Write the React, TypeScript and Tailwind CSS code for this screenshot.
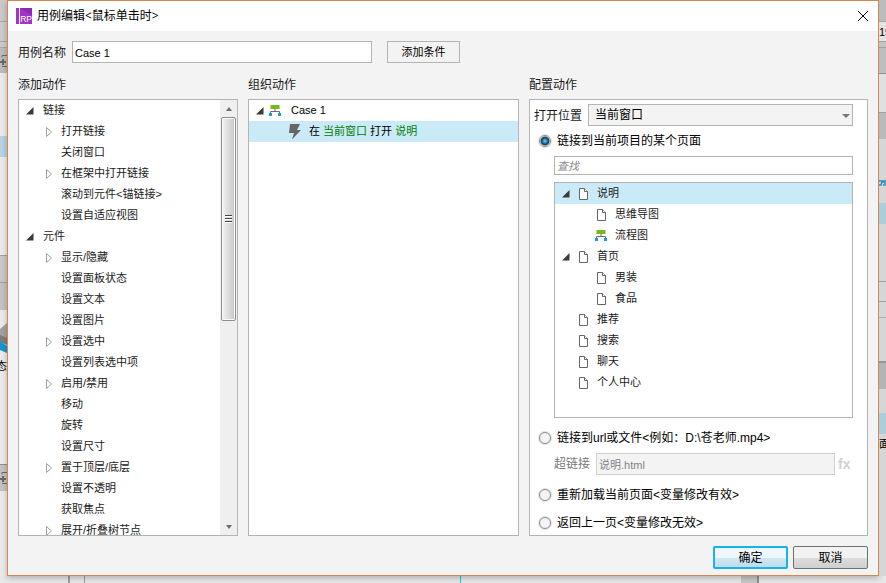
import { useState } from 'react';
import type { ReactNode } from 'react';
import clsx from 'clsx';

type NodeState = 'open' | 'closed' | 'leaf';

type ActionNode = { label: string; level: 0 | 1; state: NodeState };
type PageNode = ActionNode & { icon: 'page' | 'flow' };

const ACTIONS: ActionNode[] = [
  { label: '链接', level: 0, state: 'open' },
  { label: '打开链接', level: 1, state: 'closed' },
  { label: '关闭窗口', level: 1, state: 'leaf' },
  { label: '在框架中打开链接', level: 1, state: 'closed' },
  { label: '滚动到元件<锚链接>', level: 1, state: 'leaf' },
  { label: '设置自适应视图', level: 1, state: 'leaf' },
  { label: '元件', level: 0, state: 'open' },
  { label: '显示/隐藏', level: 1, state: 'closed' },
  { label: '设置面板状态', level: 1, state: 'leaf' },
  { label: '设置文本', level: 1, state: 'leaf' },
  { label: '设置图片', level: 1, state: 'leaf' },
  { label: '设置选中', level: 1, state: 'closed' },
  { label: '设置列表选中项', level: 1, state: 'leaf' },
  { label: '启用/禁用', level: 1, state: 'closed' },
  { label: '移动', level: 1, state: 'leaf' },
  { label: '旋转', level: 1, state: 'leaf' },
  { label: '设置尺寸', level: 1, state: 'leaf' },
  { label: '置于顶层/底层', level: 1, state: 'closed' },
  { label: '设置不透明', level: 1, state: 'leaf' },
  { label: '获取焦点', level: 1, state: 'leaf' },
  { label: '展开/折叠树节点', level: 1, state: 'closed' },
];

const PAGES: PageNode[] = [
  { label: '说明', level: 0, state: 'open', icon: 'page' },
  { label: '思维导图', level: 1, state: 'leaf', icon: 'page' },
  { label: '流程图', level: 1, state: 'leaf', icon: 'flow' },
  { label: '首页', level: 0, state: 'open', icon: 'page' },
  { label: '男装', level: 1, state: 'leaf', icon: 'page' },
  { label: '食品', level: 1, state: 'leaf', icon: 'page' },
  { label: '推荐', level: 0, state: 'leaf', icon: 'page' },
  { label: '搜索', level: 0, state: 'leaf', icon: 'page' },
  { label: '聊天', level: 0, state: 'leaf', icon: 'page' },
  { label: '个人中心', level: 0, state: 'leaf', icon: 'page' },
];

function Logo() {
  return (
    <svg viewBox="0 0 16 16" className="h-4 w-4 shrink-0">
      <rect width="16" height="16" fill="#a333c8" />
      <path d="M4 0h12v7.500z" fill="#8a2bb0" />
      <rect x="3" width="1" height="16" fill="#fff" />
      <text x="4.200" y="14" fontSize="8.500" fontFamily="Liberation Sans, sans-serif" fill="#fff">RP</text>
    </svg>
  );
}

function Expander({ state, label }: { state: NodeState; label: string }) {
  if (state === 'leaf') return <span className="w-2 shrink-0" />;
  return (
    <button type="button" aria-label={`${state === 'open' ? '折叠' : '展开'} ${label}`} className="w-2 shrink-0">
      {state === 'open' ? (
        <svg viewBox="0 0 8 8" className="h-2 w-2">
          <path d="M7.500 0v7.500H0z" fill="#3a3a3a" />
        </svg>
      ) : (
        <svg viewBox="0 0 8 10" className="h-[10px] w-2">
          <path d="M1.500.5v9L6.500 5z" fill="#fff" stroke="#a0a0a0" />
        </svg>
      )}
    </button>
  );
}

function PageIcon() {
  return (
    <svg viewBox="0 0 12 12" className="h-3 w-3 shrink-0" fill="#fff" stroke="#666">
      <path d="M1.500.5h5l3 3v8h-8z" />
      <path d="M6.500.5v3h3" />
    </svg>
  );
}

function FlowIcon() {
  return (
    <svg viewBox="0 0 12 12" className="h-3 w-3 shrink-0">
      <path d="M6 4v2.500M1.500 9V6.500h9V9" fill="none" stroke="#6b6b6b" />
      <rect x="1.500" width="9" height="4" fill="#77b81e" />
      <rect y="8" width="3" height="3" fill="#1d9ad6" />
      <rect x="9" y="8" width="3" height="3" fill="#1d9ad6" />
    </svg>
  );
}

function BoltIcon() {
  return (
    <svg viewBox="0 0 12 16" className="h-4 w-3 shrink-0">
      <path d="M1 0h10L8 6h4L3 15.500 5 9H0z" fill="#666" />
    </svg>
  );
}

function ScrollBar() {
  return (
    <div className="flex w-[17px] shrink-0 flex-col bg-[#efefef]">
      <button type="button" aria-label="向上滚动" className="flex h-[17px] shrink-0 items-center justify-center">
        <svg viewBox="0 0 6 4" className="h-1 w-[6px]"><path d="M0 4l3-4 3 4z" fill="#6e6e6e" /></svg>
      </button>
      <div className="mx-px flex h-[47%] items-center justify-center rounded-xs border border-[#8f8f8f] bg-linear-to-r from-[#f4f4f4] via-[#dcdcdc] to-[#c4c6c8] shadow-[inset_0_0_0_1px_#fafafa]">
        <svg viewBox="0 0 7 8" className="h-2 w-[7px]">
          <path d="M0 .5h7M0 3.500h7M0 6.500h7" stroke="#444" />
          <path d="M0 1.500h7M0 4.500h7M0 7.500h7" stroke="#fff" />
        </svg>
      </div>
      <div className="flex-1" />
      <button type="button" aria-label="向下滚动" className="flex h-[17px] shrink-0 items-center justify-center">
        <svg viewBox="0 0 6 4" className="h-1 w-[6px]"><path d="M0 0l3 4 3-4z" fill="#6e6e6e" /></svg>
      </button>
    </div>
  );
}

function Column({ title, children }: { title: string; children: ReactNode }) {
  return (
    <section className="flex min-w-0 flex-col gap-[5px]">
      <h2 className="text-xs leading-[18px]">{title}</h2>
      {children}
    </section>
  );
}

function RadioRow({ value, label, current, onPick }: { value: string; label: string; current: string; onPick: (v: string) => void }) {
  const checked = value === current;
  return (
    <label className="flex h-[18px] items-center gap-[6px] pl-[5px] text-xs whitespace-nowrap text-black">
      <input
        type="radio"
        name="link-target"
        value={value}
        checked={checked}
        onChange={() => onPick(value)}
        className={clsx(
          'h-3 w-3 shrink-0 appearance-none rounded-full border border-[#8e8e8e] ring-1 ring-[#e2e2e2]',
          checked
            ? 'bg-[radial-gradient(circle_at_center,#6cc6ea_0px,#2b8fc0_2px,#17506f_3px,#1b4660_4px,#f4f4f4_5px)]'
            : 'bg-[#f4f4f4]'
        )}
      />
      {label}
    </label>
  );
}

// Slivers of the editor window visible behind the dialog
function LeftBackdrop() {
  return (
    <div aria-hidden="true" className="flex w-[7px] shrink-0 flex-col overflow-hidden bg-[#ebebeb] text-[11px] leading-4 text-black">
      <div className="h-[22px] border-b border-[#a8a8a8] bg-[#cacaca]" />
      <div className="h-5 border-b border-[#a8a8a8] bg-[#cccccc]" />
      <div className="h-[6px] border-b border-[#a8a8a8] bg-[#cccccc]" />
      <div className="flex h-[25px] items-center bg-[#bdbdbd]"><BackdropPlus /></div>
      <div className="h-[63px]" />
      <div className="h-[21px] bg-[#b5d5e2]" />
      <div className="h-[98px]" />
      <div className="h-[28px] border-y border-[#a0a0a0] bg-[#c8c8c8]" />
      <div className="h-[27px] bg-[#c3c3c3]" />
      <div className="h-[13px]" />
      <svg viewBox="0 0 7 30" className="h-[30px] w-[7px]">
        <path d="M0 6l7-6v20L0 14z" fill="#a2a2a2" />
        <path d="M0 12l7 3v7L0 19z" fill="#7d7d7d" />
        <path d="M0 18l7 5v7L0 27z" fill="#1596d4" />
      </svg>
      <div className="mt-[5px] flex h-4 justify-end"><span>态</span></div>
      <div className="h-[90px]" />
      <div className="flex h-[27px] items-center border-t border-[#909090] bg-[#c3c3c3]"><BackdropPlus /></div>
    </div>
  );
}

function BackdropPlus() {
  return (
    <svg viewBox="0 0 7 14" className="h-[14px] w-[7px]" fill="none" stroke="#6a6a6a">
      <path d="M7 1.500H2v2M7 12.500H2" />
      <path d="M0 8h6M3 5v6" strokeWidth="2" />
    </svg>
  );
}

function RightBackdrop() {
  return (
    <div aria-hidden="true" className="flex w-[7px] shrink-0 flex-col overflow-hidden bg-[#d6d6d6] text-[11px] leading-4 text-black">
      <div className="h-[22px] border-b border-[#a8a8a8] bg-[#bcbcbc]" />
      <div className="flex h-5 items-center border-b border-[#a0a0a0] bg-[#e4e4e4]">19</div>
      <div className="h-[6px] border-b border-[#a0a0a0] bg-[#c4c4c4]" />
      <div className="h-[26px] border-b border-[#909090] bg-[#bebebe]" />
      <div className="h-[38px] bg-[#e0e0e0]" />
      <div className="h-[27px] border-t border-[#a0a0a0] bg-[#bababa]" />
      <div className="h-[41px]" />
      <svg viewBox="0 0 7 6" className="h-[6px] w-[7px]" fill="none" stroke="#2f93bd" strokeWidth="1.500">
        <path d="M0 1h7M0 5h2l1-3h3v3H4" />
      </svg>
      <div className="h-[17px]" />
      <div className="h-[21px] bg-[#aecddb]" />
      <div className="h-[57px]" />
      <div className="h-[21px] border-y border-[#a0a0a0]" />
      <div className="h-4 border-b border-[#b0b0b0]" />
      <div className="h-[43px]" />
      <div className="h-[28px] border-t-2 border-[#979797] bg-[#b4b4b4]" />
      <div className="h-6" />
      <div className="h-[21px] bg-[#aecddb]" />
      <div className="h-5 pt-[2px]">面</div>
    </div>
  );
}

function BottomBackdrop() {
  return (
    <div aria-hidden="true" className="flex h-[7px] bg-[#e8e8e8]">
      <div className="w-[70px] border-r-2 border-[#a0a0a0]" />
      <div className="w-[15px] border-r border-[#a0a0a0]" />
      <div className="w-[376px] border-r border-[#2cc4dc]" />
      <div className="flex-1" />
      <div className="w-[18px] border-r-2 border-[#909090] bg-[#c8c8c8]" />
      <div className="w-[127px]" />
    </div>
  );
}

export default function App() {
  const [name, setName] = useState('Case 1');
  const [target, setTarget] = useState('page');

  return (
    <div className="flex min-h-screen flex-col bg-[#dcdcdc] font-['Liberation_Sans','Noto_Sans_CJK_SC',sans-serif] text-[#1a1a1a]">
      <div className="relative z-10 flex flex-1">
        <LeftBackdrop />

        <main role="dialog" aria-labelledby="dialog-title" className="flex min-w-0 flex-1 flex-col border border-[#d8864f] bg-[#f3f3f3] shadow-[0_2px_6px_rgba(0,0,0,0.25)]">
          <header className="flex h-[30px] items-center gap-[5px] bg-white pr-[9px] pl-2 text-black">
            <Logo />
            <h1 id="dialog-title" className="flex-1 font-['Open_Sans','Noto_Sans_CJK_SC',sans-serif] text-xs">{'用例编辑<鼠标单击时>'}</h1>
            <button type="button" aria-label="关闭">
              <svg viewBox="0 0 12 12" className="h-3 w-3" stroke="#000" fill="none">
                <path d="M1 1l10 10M11 1L1 11" />
              </svg>
            </button>
          </header>

          <div className="flex flex-1 flex-col px-[10px] pt-[10px] pb-[6px]">
            <div className="flex items-center">
              <label htmlFor="case-name" className="w-[54px] pt-[2px] text-xs whitespace-nowrap">用例名称</label>
              <input
                id="case-name"
                value={name}
                onChange={(e) => setName(e.target.value)}
                className="h-[22px] w-[300px] border border-[#b4b4b4] bg-white px-[2px] pt-[2px] text-[11px] text-black outline-none"
              />
              <button type="button" className="ml-[15px] h-[22px] w-[73px] border border-[#b4b4b4] text-[11px] text-black">添加条件</button>
            </div>

            <div className="mt-[13px] grid flex-1 grid-cols-[220fr_271fr_339fr] gap-[10px]">
              <Column title="添加动作">
                <div className="flex h-0 grow overflow-hidden border border-[#b4b4b4] bg-white">
                  <ul className="flex-1 overflow-hidden text-[11px] whitespace-nowrap">
                    {ACTIONS.map((a) => (
                      <li key={a.label} className={clsx('flex h-[21px] items-center', a.level === 0 ? 'gap-[9px] pl-[7px]' : 'gap-2 pl-[26px]')}>
                        <Expander state={a.state} label={a.label} />
                        <span>{a.label}</span>
                      </li>
                    ))}
                  </ul>
                  <ScrollBar />
                </div>
              </Column>

              <Column title="组织动作">
                <ul className="flex-1 border border-[#b4b4b4] bg-white text-[11px] whitespace-nowrap text-black">
                  <li className="flex h-[21px] items-center pl-[7px]">
                    <Expander state="open" label="Case 1" />
                    <span className="flex items-center gap-[10px] pl-[5px]"><FlowIcon />Case 1</span>
                  </li>
                  <li className="flex h-[21px] items-center gap-2 bg-[#cbeaf7] pl-10">
                    <BoltIcon />
                    <span>
                      在 <span className="text-[#008000]">当前窗口</span> 打开 <span className="text-[#008000]">说明</span>
                    </span>
                  </li>
                </ul>
              </Column>

              <Column title="配置动作">
                <div className="flex flex-1 flex-col border border-[#b4b4b4] bg-white pt-1 pr-[14px] pb-[3px] pl-1">
                  <div className="flex items-center">
                    <label htmlFor="open-in" className="w-[54px] pt-[2px] text-xs whitespace-nowrap">打开位置</label>
                    <div className="relative flex-1">
                      <select
                        id="open-in"
                        defaultValue="current"
                        className="block h-[22px] w-full appearance-none border border-[#b4b4b4] bg-[#f3f3f3] pl-[6px] text-xs text-black outline-none"
                      >
                        <option value="current">当前窗口</option>
                      </select>
                      <svg viewBox="0 0 8 4" className="pointer-events-none absolute top-[10px] right-[3px] h-1 w-2">
                        <path d="M0 0h8L4 4z" fill="#777" />
                      </svg>
                    </div>
                  </div>

                  <div className="mt-[6px]">
                    <RadioRow value="page" label="链接到当前项目的某个页面" current={target} onPick={setTarget} />
                  </div>

                  <div className="mt-[6px] flex flex-1 flex-col gap-[7px] pl-5">
                    <input
                      aria-label="查找"
                      placeholder="查找"
                      className="h-[19px] border border-[#b4b4b4] bg-white px-[2px] text-[11px] italic outline-none placeholder:text-[#8a8a8a]"
                    />
                    <ul className="min-h-[236px] flex-1 border border-[#b4b4b4] bg-white text-[11px] whitespace-nowrap">
                      {PAGES.map((p, i) => (
                        <li
                          key={p.label}
                          className={clsx('flex h-[21px] items-center', i === 0 && 'bg-[#cbeaf7]', p.level === 0 ? 'pl-[7px]' : 'pl-[25px]')}
                        >
                          <Expander state={p.state} label={p.label} />
                          <span className={clsx('flex items-center', p.icon === 'page' ? 'gap-[7px] pl-2' : 'gap-2 pl-[7px]')}>
                            {p.icon === 'page' ? <PageIcon /> : <FlowIcon />}
                            {p.label}
                          </span>
                        </li>
                      ))}
                    </ul>
                  </div>

                  <div className="mt-[11px]">
                    <RadioRow value="url" label={'链接到url或文件<例如：D:\\苍老师.mp4>'} current={target} onPick={setTarget} />
                  </div>
                  <div className="mt-[6px] flex items-center pl-5">
                    <label htmlFor="hyperlink" className="w-[42px] text-xs whitespace-nowrap text-[#777]">超链接</label>
                    <input
                      id="hyperlink"
                      disabled
                      defaultValue="说明.html"
                      className="h-[22px] min-w-0 flex-1 border border-[#d0d0d0] bg-[#f3f3f3] px-[2px] text-[11px] text-[#858585]"
                    />
                    <button type="button" disabled className="w-[18px] pl-[3px] text-left text-sm leading-5 font-bold text-[#d2d2d2]">fx</button>
                  </div>
                  <div className="mt-[11px] flex flex-col gap-[10px]">
                    <RadioRow value="reload" label="重新加载当前页面<变量修改有效>" current={target} onPick={setTarget} />
                    <RadioRow value="back" label="返回上一页<变量修改无效>" current={target} onPick={setTarget} />
                  </div>
                </div>
              </Column>
            </div>

            <div className="mt-[10px] flex justify-end gap-[5px] text-xs text-black">
              <button type="button" className="h-[23px] w-[75px] rounded-xs border-2 border-[#16b4e8] bg-linear-to-b from-[#eef7fb] from-50% via-[#d3e8f3] via-50% to-[#bddcec]">确定</button>
              <button type="button" className="h-[23px] w-[75px] rounded-xs border border-[#707070] bg-linear-to-b from-[#f2f2f2] from-50% via-[#dddddd] via-50% to-[#cfcfcf]">取消</button>
            </div>
          </div>
        </main>

        <RightBackdrop />
      </div>
      <BottomBackdrop />
    </div>
  );
}
